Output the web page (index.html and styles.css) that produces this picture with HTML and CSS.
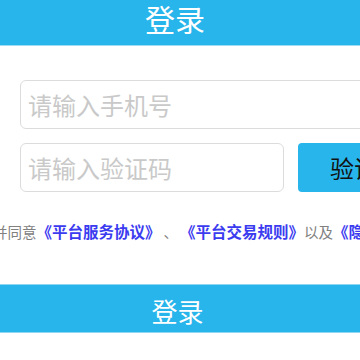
FILE: index.html
```html
<!DOCTYPE html>
<html lang="zh-CN">
<head>
<meta charset="utf-8">
<title>登录</title>
<link rel="stylesheet" href="styles.css">
</head>
<body>
<div class="page">
  <header class="topbar">登录</header>
  <main class="form">
    <div class="field-row">
      <input class="field field-phone" type="text" placeholder="请输入手机号">
    </div>
    <div class="field-row">
      <input class="field field-code" type="text" placeholder="请输入验证码">
      <button class="code-btn" type="button">验证码</button>
    </div>
    <p class="agree"><span class="lead">我已阅读并同意</span><a class="link">《平台服务协议》</a><span class="sep">、</span><a class="link">《平台交易规则》</a><span class="sep2">以及</span><a class="link">《隐私政策》</a></p>
  </main>
  <button class="submit" type="button">登录</button>
</div>
</body>
</html>
```

FILE: styles.css
```css
* { box-sizing: border-box; }
html, body {
  margin: 0;
  padding: 0;
  background: #ffffff;
  overflow: hidden;
}
body {
  width: 360px;
  height: 360px;
  font-family: "Noto Sans CJK SC", "Noto Sans", sans-serif;
}
.page {
  width: 360px;
  overflow: hidden;
}
.topbar {
  height: 46px;
  background: #27b5eb;
  border-bottom: 1px solid #9fdcf5;
  color: #ffffff;
  font-size: 30px;
  line-height: 36px;
  text-align: center;
  padding-right: 10px;
}
.form {
  padding: 34px 0 0 20px;
}
.field-row {
  display: flex;
  gap: 14px;
  margin-bottom: 14px;
  width: 500px;
}
.field {
  height: 49px;
  border: 1px solid #dcdcdc;
  border-radius: 6px;
  padding: 0 0 0 7px;
  font-family: "Noto Sans CJK SC", sans-serif;
  font-size: 24px;
  color: #333;
  background: #fff;
  outline: none;
}
.field::placeholder {
  color: #c9c9c9;
}
.field-phone {
  width: 420px;
  flex: none;
}
.field-code {
  width: 264px;
  flex: none;
}
.code-btn {
  width: 136px;
  height: 49px;
  flex: none;
  border: none;
  border-radius: 4px;
  background: #27b5eb;
  color: #111;
  font-family: "Noto Sans CJK SC", sans-serif;
  font-size: 24px;
  padding: 0;
}
.agree {
  display: flex;
  align-items: baseline;
  margin: 29px 0 0 -85px;
  white-space: nowrap;
  font-size: 14.5px;
  line-height: 20px;
  color: #808080;
}
.lead {
  flex: none;
}
.sep {
  margin: 0 2px 0 3px;
}
.sep2 {
  margin: 0;
}
.link {
  color: #3b3bf0;
  font-weight: bold;
  font-size: 15.5px;
  flex: none;
}
.submit {
  display: block;
  width: 360px;
  height: 49px;
  margin-top: 42px;
  border: none;
  border-top: 1px solid #8fd6f3;
  border-bottom: 1px solid #8fd6f3;
  background: #27b5eb;
  color: #ffffff;
  font-family: "Noto Sans CJK SC", sans-serif;
  font-size: 26px;
  line-height: 30px;
  padding: 4px 5px 0 0;
}
```
